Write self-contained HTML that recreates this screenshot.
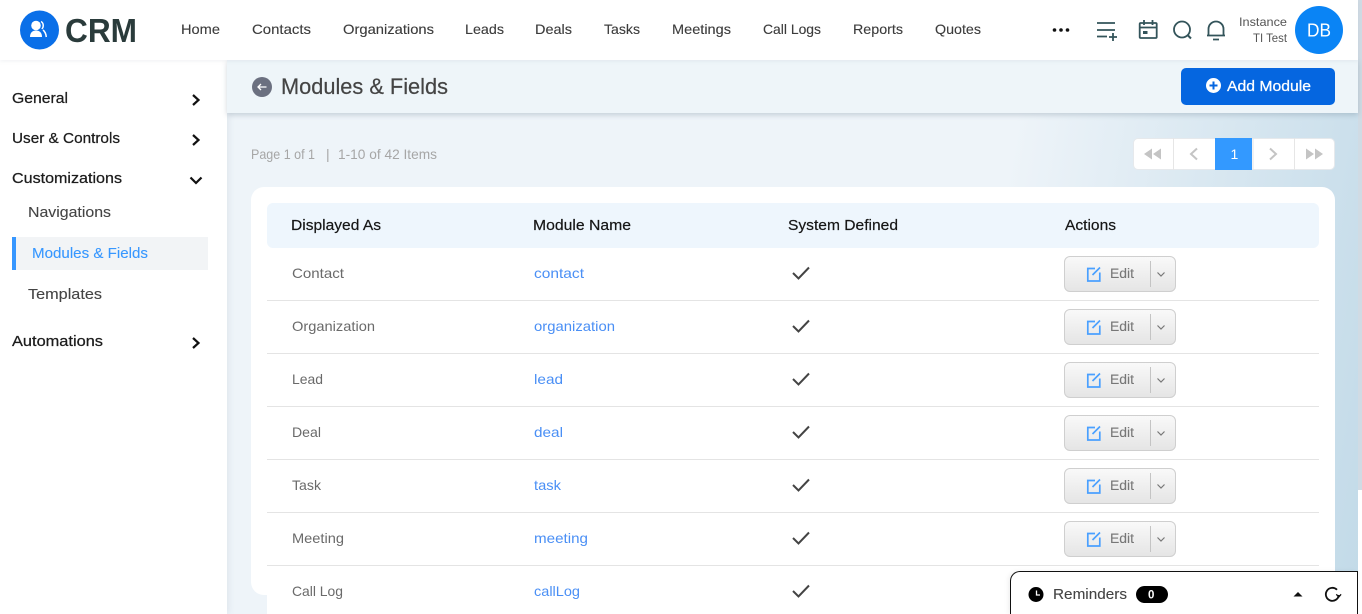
<!DOCTYPE html>
<html lang="en"><head><meta charset="utf-8"><title>CRM - Modules &amp; Fields</title>
<style>
html,body{margin:0;padding:0;width:1362px;height:614px;overflow:hidden;background:#fff}
#root{position:relative;width:1362px;height:614px;overflow:hidden;background:#fff}
.a{position:absolute}
#strip{left:1358px;top:0;width:4px;height:490px;background:#d0dbe4}
#bg{left:227px;top:60px;width:1131px;height:554px;background:linear-gradient(100deg,#eef4f9 65%,#c2dae8 100%)}
#side{left:0;top:60px;width:227px;height:554px;background:#fff;box-shadow:2px 0 6px rgba(120,140,160,.12)}
#title{left:227px;top:60px;width:1131px;height:53px;background:#eef5f9;box-shadow:0 2px 5px rgba(90,110,130,.28)}
#head{left:0;top:0;width:1358px;height:60px;background:#fff;box-shadow:0 1px 4px rgba(120,140,160,.12)}
#card{left:251px;top:187px;width:1084px;height:408px;background:#fff;border-radius:13px}
#tbl{left:267px;top:590px;width:1052px;height:24px;background:#fff}
#th{left:267px;top:203px;width:1052px;height:45px;background:#eef6fd;border-radius:6px}
#active{left:12px;top:237px;width:192px;height:33px;background:#f2f4f6;border-left:4px solid #3797ff}
#add{left:1181px;top:68px;width:154px;height:37px;background:#0566e0;border-radius:5px}
#pg{left:1133px;top:138px;width:200px;height:30px;background:#fff;border:1px solid #e6e9ec;border-radius:5px}
#pga{left:1215px;top:138px;width:37px;height:32px;background:#3399ff}
.btn{left:1064px;width:110px;height:34px;border:1px solid #cfcfcf;border-radius:6px;background:linear-gradient(#f9f9f9,#e5e5e5)}
.ln{left:267px;width:1052px;height:1px;background:#e4e4e4}
#rem{left:1010px;top:571px;width:348px;height:43px;background:#fff;border:1px solid #111;border-bottom:0;border-top-left-radius:10px;box-sizing:border-box;box-shadow:-2px 0 5px rgba(0,0,0,.06)}
svg{position:absolute;left:0;top:0}
text{font-family:"Liberation Sans",sans-serif;font-size:14px}
.nav{fill:#3c3c3c;font-size:14px;stroke:#3c3c3c;stroke-width:.12}
.sd{fill:#1c1c1c;font-size:15px;stroke:#1c1c1c;stroke-width:.25}
.sb{fill:#444;font-size:15px;stroke:#444;stroke-width:.1}
.th{fill:#161616;font-size:15px;stroke:#161616;stroke-width:.2}
.c{fill:#6a6a6a;font-size:14px}
.l{fill:#4a8ff5;font-size:14px}
.e{fill:#777;font-size:13.5px;stroke:#777;stroke-width:.1}
.p{fill:#a6a6a6;font-size:14px}
</style></head><body>
<div id="root">
<div class="a" id="strip"></div>
<div class="a" id="bg"></div>
<div class="a" id="side"></div>
<div class="a" id="title"></div>
<div class="a" id="head"></div>
<div class="a" id="card"></div>
<div class="a" id="tbl"></div>
<div class="a" id="th"></div>
<div class="a" id="active"></div>
<div class="a" id="add"></div>
<div class="a" id="pg"></div>
<div class="a" id="pga"></div>
<div class="a ln" style="top:300px"></div>
<div class="a ln" style="top:353px"></div>
<div class="a ln" style="top:406px"></div>
<div class="a ln" style="top:459px"></div>
<div class="a ln" style="top:512px"></div>
<div class="a ln" style="top:565px"></div>
<div class="a btn" style="top:256px"></div>
<div class="a btn" style="top:309px"></div>
<div class="a btn" style="top:362px"></div>
<div class="a btn" style="top:415px"></div>
<div class="a btn" style="top:468px"></div>
<div class="a btn" style="top:521px"></div>
<div class="a" id="rem"></div>

<svg width="1362" height="614" viewBox="0 0 1362 614">
<!-- logo -->
<circle cx="39.500" cy="30" r="19.500" fill="#0a6fe8"/>
<circle cx="36" cy="25.500" r="4.800" fill="#fff"/>
<path d="M30 37c0-4.500 2.500-6.500 6-6.500s6 2 6 6.500z" fill="#fff"/>
<path d="M41 21.500c2.600 1.300 3 5.500 .8 7.500M43 30c2 1.500 3 4 3.300 7" fill="none" stroke="#fff" stroke-width="1.500"/>
<text x="65" y="42" textLength="72" lengthAdjust="spacingAndGlyphs" style="font-size:33px;font-weight:700;fill:#2a3b3b">CRM</text>

<!-- nav -->
<text class="nav" x="181" y="34" textLength="39" lengthAdjust="spacingAndGlyphs">Home</text>
<text class="nav" x="252" y="34" textLength="59" lengthAdjust="spacingAndGlyphs">Contacts</text>
<text class="nav" x="343" y="34" textLength="91" lengthAdjust="spacingAndGlyphs">Organizations</text>
<text class="nav" x="465" y="34" textLength="39" lengthAdjust="spacingAndGlyphs">Leads</text>
<text class="nav" x="535" y="34" textLength="37" lengthAdjust="spacingAndGlyphs">Deals</text>
<text class="nav" x="604" y="34" textLength="36" lengthAdjust="spacingAndGlyphs">Tasks</text>
<text class="nav" x="672" y="34" textLength="59" lengthAdjust="spacingAndGlyphs">Meetings</text>
<text class="nav" x="763" y="34" textLength="58" lengthAdjust="spacingAndGlyphs">Call Logs</text>
<text class="nav" x="853" y="34" textLength="50" lengthAdjust="spacingAndGlyphs">Reports</text>
<text class="nav" x="935" y="34" textLength="46" lengthAdjust="spacingAndGlyphs">Quotes</text>

<!-- header icons -->
<circle cx="1054.500" cy="30" r="1.800" fill="#111"/><circle cx="1061" cy="30" r="1.800" fill="#111"/><circle cx="1067.500" cy="30" r="1.800" fill="#111"/>
<g fill="none" stroke="#33545a" stroke-width="1.800">
<path d="M1097 23h18M1097 30h18M1097 36.500h10M1113 33v8M1109 37h8"/>
<rect x="1139.700" y="23" width="17" height="15" rx="1"/>
<path d="M1144 20v5M1152.500 20v5M1140 27.500h16.500"/>
<circle cx="1182" cy="29.500" r="8"/><path d="M1187.500 35l3.500 3.500" stroke-width="2"/>
<path d="M1208.500 35.500v-6.500a7.500 7.500 0 0 1 15 0v6.500M1207 35.500h18M1213 39.500h6"/>
</g>
<rect x="1143" y="31" width="4.500" height="3" fill="#33545a"/>
<text x="1239" y="26" textLength="48" lengthAdjust="spacingAndGlyphs" style="font-size:12px;fill:#555">Instance</text>
<text x="1253" y="42" textLength="34" lengthAdjust="spacingAndGlyphs" style="font-size:12px;fill:#555">TI Test</text>
<circle cx="1319" cy="30" r="24" fill="#0a84f5"/>
<text x="1307" y="36.500" textLength="24" lengthAdjust="spacingAndGlyphs" style="font-size:18px;fill:#fff">DB</text>

<!-- sidebar -->
<text class="sd" x="12" y="103" textLength="56" lengthAdjust="spacingAndGlyphs">General</text>
<text class="sd" x="12" y="143" textLength="108" lengthAdjust="spacingAndGlyphs">User &amp; Controls</text>
<text class="sd" x="12" y="183" textLength="110" lengthAdjust="spacingAndGlyphs">Customizations</text>
<text class="sb" x="28" y="217" textLength="83" lengthAdjust="spacingAndGlyphs">Navigations</text>
<text class="sb" x="32" y="258" textLength="116" lengthAdjust="spacingAndGlyphs" style="fill:#3797ff;stroke:#3797ff">Modules &amp; Fields</text>
<text class="sb" x="28" y="299" textLength="74" lengthAdjust="spacingAndGlyphs">Templates</text>
<text class="sd" x="12" y="346" textLength="91" lengthAdjust="spacingAndGlyphs">Automations</text>
<g fill="none" stroke="#111" stroke-width="2.200">
<path d="M193 95l5.500 5-5.500 5M193 135l5.500 5-5.500 5M193 338l5.500 5-5.500 5M190.500 177.500l5.500 5.500 5.500-5.500"/>
</g>

<!-- title -->
<circle cx="262" cy="87" r="10" fill="#6b7080"/>
<path d="M266.500 87h-8M261 84l-3 3 3 3" fill="none" stroke="#fff" stroke-width="1.300"/>
<text x="281" y="94" textLength="167" lengthAdjust="spacingAndGlyphs" style="font-size:22px;fill:#444;stroke:#444;stroke-width:.2">Modules &amp; Fields</text>
<circle cx="1213.500" cy="85.500" r="7.500" fill="#fff"/>
<path d="M1213.500 81.500v8M1209.500 85.500h8" stroke="#0566e0" stroke-width="2"/>
<text x="1227" y="91" textLength="84" lengthAdjust="spacingAndGlyphs" style="font-size:15px;fill:#fff;stroke:#fff;stroke-width:.25">Add Module</text>

<!-- page info -->
<text class="p" x="251" y="159" textLength="64" lengthAdjust="spacingAndGlyphs">Page 1 of 1</text>
<text class="p" x="326" y="159">|</text>
<text class="p" x="338" y="159" textLength="99" lengthAdjust="spacingAndGlyphs">1-10 of 42 Items</text>

<!-- pagination -->
<path d="M1173.500 138v32M1294.500 138v32M1253 138v32" stroke="#e6e6e6" stroke-width="1"/>
<path d="M1152 148.500l-8 5.500 8 5.500zM1161 148.500l-8 5.500 8 5.500zM1306 148.500l8 5.500-8 5.500zM1315 148.500l8 5.500-8 5.500z" fill="#c4c4c4"/>
<path d="M1197 148.500l-6 5.500 6 5.500M1270 148.500l6 5.500-6 5.500" fill="none" stroke="#c4c4c4" stroke-width="2"/>
<text x="1230.500" y="159" style="font-size:14px;fill:#fff">1</text>

<!-- table head -->
<text class="th" x="291" y="230" textLength="90" lengthAdjust="spacingAndGlyphs">Displayed As</text>
<text class="th" x="533" y="230" textLength="98" lengthAdjust="spacingAndGlyphs">Module Name</text>
<text class="th" x="788" y="230" textLength="110" lengthAdjust="spacingAndGlyphs">System Defined</text>
<text class="th" x="1065" y="230" textLength="51" lengthAdjust="spacingAndGlyphs">Actions</text>

<!-- rows -->
<text class="c" x="292" y="278" textLength="52" lengthAdjust="spacingAndGlyphs">Contact</text>
<text class="c" x="292" y="331" textLength="83" lengthAdjust="spacingAndGlyphs">Organization</text>
<text class="c" x="292" y="384" textLength="31" lengthAdjust="spacingAndGlyphs">Lead</text>
<text class="c" x="292" y="437" textLength="29" lengthAdjust="spacingAndGlyphs">Deal</text>
<text class="c" x="292" y="490" textLength="29" lengthAdjust="spacingAndGlyphs">Task</text>
<text class="c" x="292" y="543" textLength="52" lengthAdjust="spacingAndGlyphs">Meeting</text>
<text class="c" x="292" y="596" textLength="51" lengthAdjust="spacingAndGlyphs">Call Log</text>
<text class="l" x="534" y="278" textLength="50" lengthAdjust="spacingAndGlyphs">contact</text>
<text class="l" x="534" y="331" textLength="81" lengthAdjust="spacingAndGlyphs">organization</text>
<text class="l" x="534" y="384" textLength="29" lengthAdjust="spacingAndGlyphs">lead</text>
<text class="l" x="534" y="437" textLength="29" lengthAdjust="spacingAndGlyphs">deal</text>
<text class="l" x="534" y="490" textLength="27" lengthAdjust="spacingAndGlyphs">task</text>
<text class="l" x="534" y="543" textLength="54" lengthAdjust="spacingAndGlyphs">meeting</text>
<text class="l" x="534" y="596" textLength="46" lengthAdjust="spacingAndGlyphs">callLog</text>
<path d="M793 273l5.500 5.500 10.500-11M793 326l5.500 5.500 10.500-11M793 379l5.500 5.500 10.500-11M793 432l5.500 5.500 10.500-11M793 485l5.500 5.500 10.500-11M793 538l5.500 5.500 10.500-11M793 591l5.500 5.500 10.500-11" fill="none" stroke="#444" stroke-width="2"/>

<!-- edit buttons -->
<g>
<path d="M1150.500 261v26" stroke="#c4c4c4"/>
<path d="M1095 268.500h-7.200v12.500h12v-8.500" fill="none" stroke="#4aa0ff" stroke-width="1.700"/>
<path d="M1092.500 275l7.500-7.500" stroke="#4aa0ff" stroke-width="1.700"/>
<path d="M1157.500 272.500l3.500 3.500 3.500-3.500" fill="none" stroke="#777" stroke-width="1.200"/>
<text class="e" x="1110" y="278" textLength="24" lengthAdjust="spacingAndGlyphs">Edit</text>
</g>
<g transform="translate(0 53)">
<path d="M1150.500 261v26" stroke="#c4c4c4"/>
<path d="M1095 268.500h-7.200v12.500h12v-8.500" fill="none" stroke="#4aa0ff" stroke-width="1.700"/>
<path d="M1092.500 275l7.500-7.500" stroke="#4aa0ff" stroke-width="1.700"/>
<path d="M1157.500 272.500l3.500 3.500 3.500-3.500" fill="none" stroke="#777" stroke-width="1.200"/>
<text class="e" x="1110" y="278" textLength="24" lengthAdjust="spacingAndGlyphs">Edit</text>
</g>
<g transform="translate(0 106)">
<path d="M1150.500 261v26" stroke="#c4c4c4"/>
<path d="M1095 268.500h-7.200v12.500h12v-8.500" fill="none" stroke="#4aa0ff" stroke-width="1.700"/>
<path d="M1092.500 275l7.500-7.500" stroke="#4aa0ff" stroke-width="1.700"/>
<path d="M1157.500 272.500l3.500 3.500 3.500-3.500" fill="none" stroke="#777" stroke-width="1.200"/>
<text class="e" x="1110" y="278" textLength="24" lengthAdjust="spacingAndGlyphs">Edit</text>
</g>
<g transform="translate(0 159)">
<path d="M1150.500 261v26" stroke="#c4c4c4"/>
<path d="M1095 268.500h-7.200v12.500h12v-8.500" fill="none" stroke="#4aa0ff" stroke-width="1.700"/>
<path d="M1092.500 275l7.500-7.500" stroke="#4aa0ff" stroke-width="1.700"/>
<path d="M1157.500 272.500l3.500 3.500 3.500-3.500" fill="none" stroke="#777" stroke-width="1.200"/>
<text class="e" x="1110" y="278" textLength="24" lengthAdjust="spacingAndGlyphs">Edit</text>
</g>
<g transform="translate(0 212)">
<path d="M1150.500 261v26" stroke="#c4c4c4"/>
<path d="M1095 268.500h-7.200v12.500h12v-8.500" fill="none" stroke="#4aa0ff" stroke-width="1.700"/>
<path d="M1092.500 275l7.500-7.500" stroke="#4aa0ff" stroke-width="1.700"/>
<path d="M1157.500 272.500l3.500 3.500 3.500-3.500" fill="none" stroke="#777" stroke-width="1.200"/>
<text class="e" x="1110" y="278" textLength="24" lengthAdjust="spacingAndGlyphs">Edit</text>
</g>
<g transform="translate(0 265)">
<path d="M1150.500 261v26" stroke="#c4c4c4"/>
<path d="M1095 268.500h-7.200v12.500h12v-8.500" fill="none" stroke="#4aa0ff" stroke-width="1.700"/>
<path d="M1092.500 275l7.500-7.500" stroke="#4aa0ff" stroke-width="1.700"/>
<path d="M1157.500 272.500l3.500 3.500 3.500-3.500" fill="none" stroke="#777" stroke-width="1.200"/>
<text class="e" x="1110" y="278" textLength="24" lengthAdjust="spacingAndGlyphs">Edit</text>
</g>

<!-- reminders -->
<circle cx="1036" cy="594.500" r="7.500" fill="#000"/>
<path d="M1036.500 590.500v4.500h3.500" fill="none" stroke="#fff" stroke-width="1.300"/>
<text x="1053" y="599" textLength="74" lengthAdjust="spacingAndGlyphs" style="font-size:15px;fill:#444;stroke:#444;stroke-width:.1">Reminders</text>
<rect x="1136" y="586" width="32" height="17" rx="8.500" fill="#000"/>
<text x="1148" y="598.500" style="font-size:11.500px;font-weight:700;fill:#fff">0</text>
<path d="M1293.500 596.500l4.500-4.500 4.500 4.500z" fill="#111"/>
<path d="M1337 589.800A6.500 6.500 0 1 0 1338.800 595" fill="none" stroke="#111" stroke-width="1.800"/>
<path d="M1336.300 594.300l2.500 2.700 2.300-2.700" fill="none" stroke="#111" stroke-width="1.300"/>
</svg>
</div>
</body></html>
